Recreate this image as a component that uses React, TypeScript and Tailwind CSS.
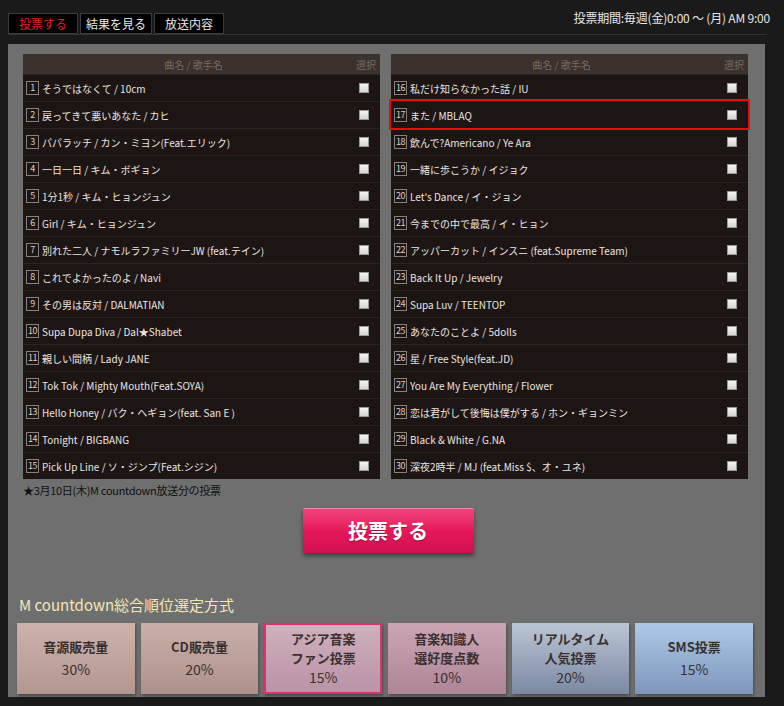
import React from 'react';

const FONT = { fontFamily: '"Noto Sans CJK JP", "Noto Sans", sans-serif' };

const leftSongs = [
  'そうではなくて / 10cm',
  '戻ってきて悪いあなた / カヒ',
  'パパラッチ / カン・ミヨン(Feat.エリック)',
  '一日一日 / キム・ボギョン',
  '1分1秒 / キム・ヒョンジュン',
  'Girl / キム・ヒョンジュン',
  '別れた二人 / ナモルラファミリーJW (feat.テイン)',
  'これでよかったのよ / Navi',
  'その男は反対 / DALMATIAN',
  'Supa Dupa Diva / Dal★Shabet',
  '親しい間柄 / Lady JANE',
  'Tok Tok / Mighty Mouth(Feat.SOYA)',
  'Hello Honey / パク・ヘギョン(feat. San E )',
  'Tonight / BIGBANG',
  'Pick Up Line / ソ・ジンプ(Feat.シジン)',
];

const rightSongs = [
  '私だけ知らなかった話 / IU',
  'また / MBLAQ',
  '飲んで?Americano / Ye Ara',
  '一緒に歩こうか / イジョク',
  "Let's Dance / イ・ジョン",
  '今までの中で最高 / イ・ヒョン',
  'アッパーカット / インスニ (feat.Supreme Team)',
  'Back It Up / Jewelry',
  'Supa Luv / TEENTOP',
  'あなたのことよ / 5dolls',
  '星 / Free Style(feat.JD)',
  'You Are My Everything / Flower',
  '恋は君がして後悔は僕がする / ホン・ギョンミン',
  'Black & White / G.NA',
  '深夜2時半 / MJ (feat.Miss $、オ・ユネ)',
];

const methods = [
  { lines: ['音源販売量'], pct: '30%', cls: 'bg-gradient-to-b from-[#cdb3ac] to-[#b39690]' },
  { lines: ['CD販売量'], pct: '20%', cls: 'bg-gradient-to-b from-[#cab0a9] to-[#ae918b]' },
  { lines: ['アジア音楽', 'ファン投票'], pct: '15%', cls: 'bg-gradient-to-b from-[#cfb0bc] to-[#b993a7] border-2 border-[#e0306c]' },
  { lines: ['音楽知識人', '選好度点数'], pct: '10%', cls: 'bg-gradient-to-b from-[#cba5b6] to-[#ad8597]' },
  { lines: ['リアルタイム', '人気投票'], pct: '20%', cls: 'bg-gradient-to-b from-[#bcc6d4] to-[#7a89a3]' },
  { lines: ['SMS投票'], pct: '15%', cls: 'bg-gradient-to-b from-[#adc9e8] to-[#7e96ba]' },
];

function SongList({ songs, start, highlight }: { songs: string[]; start: number; highlight?: number }) {
  return (
    <div className="w-[357px] bg-[#1d1513]">
      <div className="h-[20px] bg-[#3b322e] flex items-center text-[10px] text-[#756a64]">
        <span className="flex-1 text-center pl-[16px]">曲名 / 歌手名</span>
        <span className="w-[32px] text-right pr-[4px]">選択</span>
      </div>
      {songs.map((song, i) => {
        const n = start + i;
        const hot = n === highlight;
        return (
          <div
            key={n}
            className={`h-[27px] flex items-center border-t border-[#2c2420] ${hot ? 'outline-2 outline-[#e01010] relative z-10' : ''}`}
          >
            <span className="ml-[3px] w-[13px] h-[14px] border border-[#8a807a] text-[9px] leading-[12px] text-center text-[#d8d0cc] tracking-[-0.5px]">
              {n}
            </span>
            <span className="ml-[3px] flex-1 text-[10px] text-[#ece4e0] whitespace-nowrap">{song}</span>
            <span className="w-[10px] h-[10px] mr-[11px] border border-[#9a9a9a] bg-gradient-to-b from-[#f4f4f4] to-[#d6d6d6]" />
          </div>
        );
      })}
    </div>
  );
}

export default function App() {
  return (
    <div className="w-[784px] h-[706px] bg-[#1a1a1a] overflow-hidden" style={FONT}>
      <div className="h-[44px] pl-[8px] pr-[17px]">
        <div className="h-[35px] flex items-start justify-between border-b border-[#333]">
          <div className="flex gap-[2px] mt-[13px]">
            <div className="w-[70px] h-[21px] bg-black border border-[#3c3c3c] text-[12px] leading-[19px] text-center text-[#e0202c]">投票する</div>
            <div className="w-[72px] h-[21px] bg-black border border-[#3c3c3c] text-[12px] leading-[19px] text-center text-[#e8e8e8]">結果を見る</div>
            <div className="w-[70px] h-[21px] bg-black border border-[#3c3c3c] text-[12px] leading-[19px] text-center text-[#e8e8e8]">放送内容</div>
          </div>
          <div className="mt-[9px] -mr-[3px] text-[12px] text-[#e6e6e6] tracking-[-0.2px]">投票期間:毎週(金)0:00 ～ (月) AM 9:00</div>
        </div>
      </div>

      <div className="ml-[8px] w-[757px] h-[653px] bg-[#6f6f6f] pt-[10px]">
        <div className="flex gap-[11px] pl-[15px]">
          <SongList songs={leftSongs} start={1} />
          <SongList songs={rightSongs} start={16} highlight={17} />
        </div>
        <div className="pl-[15px] mt-[3px] text-[11px] text-[#111] tracking-[-0.3px]">★3月10日(木)M countdown放送分の投票</div>

        <div className="flex justify-center mt-[9px] pl-[3px]">
          <button
            type="button"
            className="w-[171px] h-[45px] rounded-[2px] bg-gradient-to-b from-[#f2417c] via-[#e5175a] to-[#d01050] border-t border-[#f78aac] shadow-[0_3px_4px_rgba(0,0,0,0.45)] text-[20px] font-bold text-white [text-shadow:0_1px_1px_rgba(0,0,0,0.35)]"
          >
            投票する
          </button>
        </div>

        <div className="pl-[11px] mt-[42px] text-[15px] text-[#f2e7b4] leading-[20px]">M countdown総合順位選定方式</div>

        <div className="ml-[9px] mt-[8px] w-[736px] grid grid-cols-6 gap-[6px]">
          {methods.map(m => (
            <div
              key={m.pct + m.lines[0]}
              className={`h-[71px] flex flex-col items-center justify-center text-[#3a3030] shadow-[1px_2px_3px_rgba(0,0,0,0.35)] ${m.cls}`}
            >
              {m.lines.map(line => (
                <span key={line} className="text-[13px] font-bold leading-[19px]">{line}</span>
              ))}
              <span className={`text-[14px] leading-[20px] ${m.lines.length === 1 ? 'mt-[3px]' : ''}`}>{m.pct}</span>
            </div>
          ))}
        </div>
      </div>
    </div>
  );
}
